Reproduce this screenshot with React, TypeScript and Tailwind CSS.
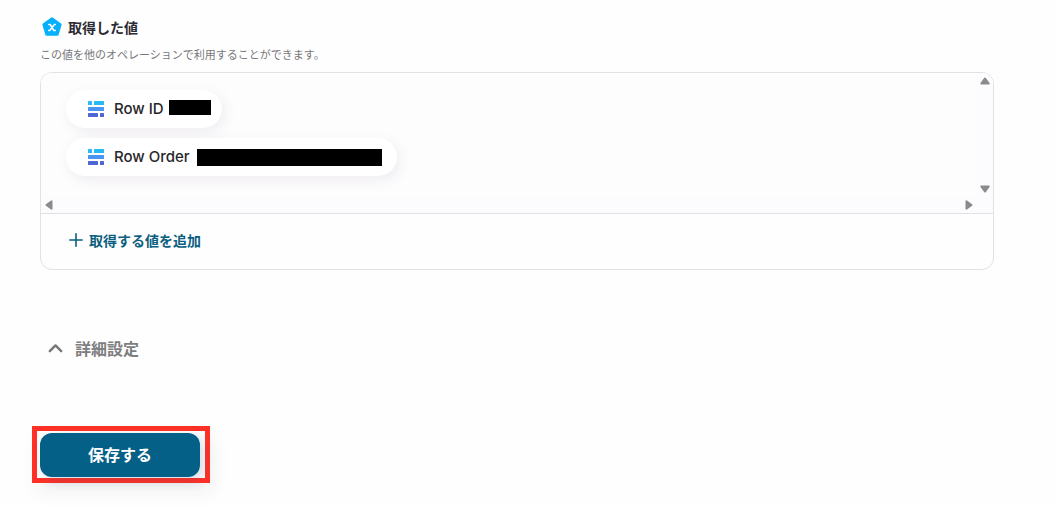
import React from 'react';

function VariableIcon() {
  return (
    <svg viewBox="0 0 20 20" className="size-5 shrink-0" aria-hidden="true">
      <path
        d="M10 1.6 18.4 7.6 15.4 17.6H4.6L1.6 7.6Z"
        fill="#06b0fa"
        stroke="#06b0fa"
        strokeWidth="2.4"
        strokeLinejoin="round"
      />
      <path
        d="M6.8 7.5h1.4l3.6 6h1.5M13.3 7.5h-.9L7.7 13.5h-1"
        fill="none"
        stroke="#fff"
        strokeWidth="1.5"
        strokeLinecap="round"
        strokeLinejoin="round"
      />
    </svg>
  );
}

function RowsIcon() {
  return (
    <svg viewBox="0 0 16 16" className="size-4 shrink-0" aria-hidden="true">
      <g fill="#29b9f7">
        <rect x="0" y="0" width="4" height="4" rx="0.6" />
        <rect x="6" y="0" width="10" height="4" rx="0.6" />
      </g>
      <rect x="0" y="6" width="16" height="4" rx="0.6" fill="#4a94f8" />
      <g fill="#4e68d3">
        <rect x="0" y="12" width="10" height="4" rx="0.6" />
        <rect x="12" y="12" width="4" height="4" rx="0.6" />
      </g>
    </svg>
  );
}

type ArrowProps = { className: string; label: string };

function ScrollArrow({ className, label }: ArrowProps) {
  return (
    <button type="button" aria-label={label} className="flex size-4 items-center justify-center">
      <svg viewBox="0 0 10 8" className={`h-2 w-2.5 ${className}`} aria-hidden="true">
        <path
          d="M5 1.4 8.8 6.6H1.2Z"
          fill="#8b8b8d"
          stroke="#8b8b8d"
          strokeWidth="1.8"
          strokeLinejoin="round"
        />
      </svg>
    </button>
  );
}

type ValuePillProps = { name: string; children: React.ReactNode };

function ValuePill({ name, children }: ValuePillProps) {
  return (
    <li className="flex h-[38px] items-center rounded-full bg-white pl-[22px] shadow-[3px_4px_14px_rgba(40,30,60,0.08)]">
      <RowsIcon />
      <span className="ml-2.5 whitespace-nowrap font-['Inter',sans-serif] text-[15px] font-medium text-[#27272b]">
        {name}
      </span>
      {children}
    </li>
  );
}

export default function App() {
  return (
    <main className="min-h-screen bg-[#fefefe] pt-4 pr-[61px] pb-6 pl-10 font-['Noto_Sans_CJK_JP',sans-serif]">
      <section>
        <h2 className="flex items-center gap-1.5 pl-0.5 text-sm leading-[22px] font-bold text-[#2c2a33]">
          <VariableIcon />
          取得した値
        </h2>
        <p className="mt-[7px] text-[11px] leading-[18px] text-[#77777b]">
          この値を他のオペレーションで利用することができます。
        </p>

        <div className="mt-[9px] overflow-hidden rounded-xl border border-[#e2e2e5]">
          <div className="grid grid-cols-[1fr_16px] grid-rows-[124px_16px] border-b border-[#e2e2e5] bg-[#fcfbfd]">
            <ul className="flex flex-col items-start gap-2.5 overflow-hidden bg-[#fefdfe] pt-[17px] pl-[25px]">
              <ValuePill name="Row ID">
                <span className="mr-[11px] mb-1 ml-[5px] h-[15px] w-[42px] bg-black" />
              </ValuePill>
              <ValuePill name="Row Order">
                <span className="mr-[15px] ml-[7px] h-[17px] w-[185px] bg-black" />
              </ValuePill>
            </ul>
            <div className="flex flex-col justify-between">
              <ScrollArrow className="" label="上へスクロール" />
              <ScrollArrow className="rotate-180" label="下へスクロール" />
            </div>
            <div className="flex justify-between">
              <ScrollArrow className="-rotate-90" label="左へスクロール" />
              <ScrollArrow className="rotate-90" label="右へスクロール" />
            </div>
          </div>
          <button
            type="button"
            className="flex h-[55px] w-full items-center gap-1.5 pb-[3px] pl-7 text-sm font-bold text-[#0b5f80]"
          >
            <svg viewBox="0 0 14 14" className="size-3.5" aria-hidden="true">
              <path d="M7 .8v12.4M.8 7h12.4" stroke="#0b5f80" strokeWidth="1.6" strokeLinecap="round" />
            </svg>
            取得する値を追加
          </button>
        </div>
      </section>

      <button
        type="button"
        className="mt-[66px] flex h-6 items-center gap-3 pl-2 text-base font-bold text-[#7e7e81]"
      >
        <svg viewBox="0 0 15 10" className="h-2.5 w-[15px]" aria-hidden="true">
          <path
            d="M1.8 8.2 7.5 2.4l5.700 5.800"
            fill="none"
            stroke="#77777a"
            strokeWidth="2.4"
            strokeLinecap="round"
            strokeLinejoin="round"
          />
        </svg>
        詳細設定
      </button>

      <div className="mt-[66px] -ml-2 w-fit border-[5px] border-[#ff3126] pt-0.5 pr-[5px] pb-px pl-[3px] shadow-[4px_10px_16px_rgba(40,30,60,0.05)]">
        <button
          type="button"
          className="h-11 w-40 rounded-xl bg-[#056087] pb-0.5 text-base font-bold text-white shadow-[4px_4px_12px_rgba(60,80,130,0.2)]"
        >
          保存する
        </button>
      </div>
    </main>
  );
}
